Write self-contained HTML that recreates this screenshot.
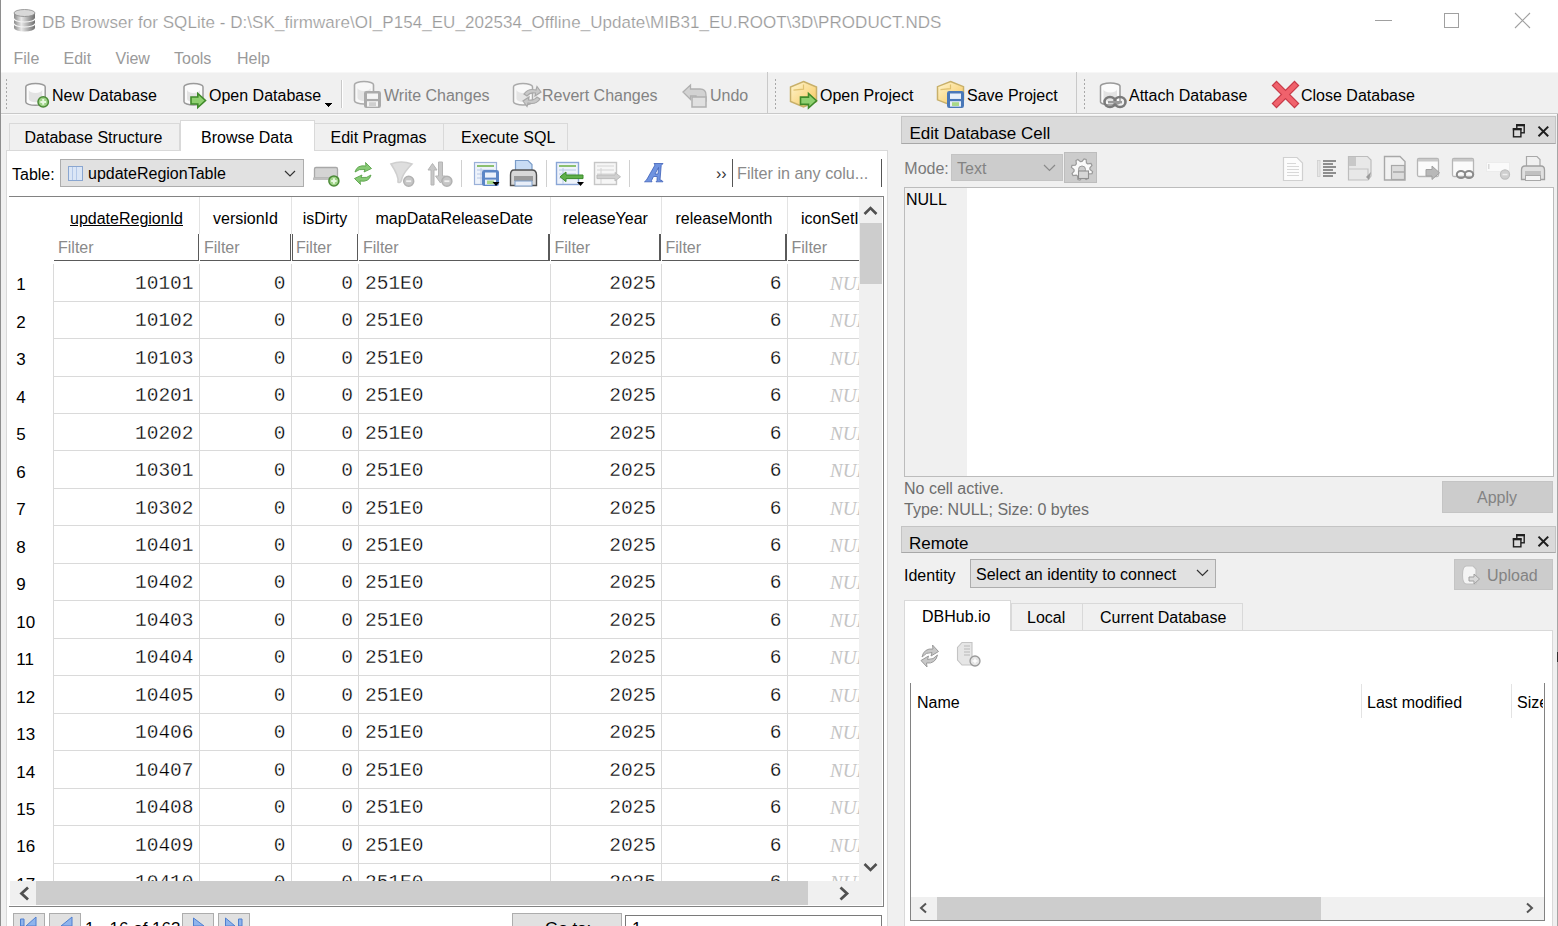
<!DOCTYPE html>
<html><head><meta charset="utf-8">
<style>
*{box-sizing:border-box;margin:0;padding:0}
html,body{width:1558px;height:926px;overflow:hidden;background:#f0f0f0}
body{position:relative;font-family:"Liberation Sans",sans-serif;font-size:16px;color:#000}
.a{position:absolute}
.t{position:absolute;white-space:nowrap;line-height:1}
svg{overflow:visible}
</style></head><body>
<div class="a" style="left:0px;top:0px;width:1px;height:926px;background:#8e8e8e"></div>
<div class="a" style="left:1557px;top:0px;width:1px;height:926px;background:#a6a6a6"></div>
<div class="a" style="left:1557px;top:652px;width:1px;height:10px;background:#333"></div>
<div class="a" style="left:1px;top:0px;width:1557px;height:73px;background:#fff"></div>
<svg class="a" style="left:13px;top:9px" width="23" height="23" viewBox="0 0 23 23"><defs><linearGradient id="dbg" x1="0" x2="1"><stop offset="0" stop-color="#8a8a8a"/><stop offset=".35" stop-color="#e8e8e8"/><stop offset="1" stop-color="#6e6e6e"/></linearGradient></defs>
<path d="M1 4 v15 a10.5 3.5 0 0 0 21 0 v-15z" fill="url(#dbg)"/>
<ellipse cx="11.5" cy="4" rx="10.5" ry="3.5" fill="#d8d8d8" stroke="#8a8a8a" stroke-width=".8"/>
<path d="M1 9.5 a10.5 3.5 0 0 0 21 0 M1 14.5 a10.5 3.5 0 0 0 21 0" fill="none" stroke="#f4f4f4" stroke-width="1.2"/></svg>
<div class="t" style="left:42px;top:13.71px;font-size:17px;color:#9b9b9b;letter-spacing:0.05px;-webkit-text-stroke:0.2px #fff;">DB Browser for SQLite - D:\SK_firmware\OI_P154_EU_202534_Offline_Update\MIB31_EU.ROOT\3D\PRODUCT.NDS</div>
<div class="a" style="left:1375px;top:20px;width:17px;height:1px;background:#a0a0a0"></div>
<div class="a" style="left:1444px;top:13px;width:15px;height:15px;border:1px solid #a0a0a0"></div>
<svg class="a" style="left:1514px;top:12px" width="17" height="17" viewBox="0 0 17 17"><path d="M1 1 L16 16 M16 1 L1 16" stroke="#a0a0a0" stroke-width="1.1"/></svg>
<div class="t" style="left:13.5px;top:51.36px;font-size:16px;color:#9a9a9a;">File</div>
<div class="t" style="left:63.5px;top:51.36px;font-size:16px;color:#9a9a9a;">Edit</div>
<div class="t" style="left:115.5px;top:51.36px;font-size:16px;color:#9a9a9a;">View</div>
<div class="t" style="left:174px;top:51.36px;font-size:16px;color:#9a9a9a;">Tools</div>
<div class="t" style="left:237px;top:51.36px;font-size:16px;color:#9a9a9a;">Help</div>
<div class="a" style="left:1px;top:72px;width:1557px;height:1px;background:#f7f7f7"></div>
<div class="a" style="left:1px;top:73px;width:1557px;height:40px;background:#f0f0f0"></div>
<div class="a" style="left:1px;top:113px;width:1557px;height:1px;background:#c9c9c9"></div>
<div class="a" style="left:1px;top:114px;width:1556px;height:1px;background:#fafafa"></div>
<div class="a" style="left:6px;top:79px;width:1px;height:2px;background:#a8a8a8"></div>
<div class="a" style="left:6px;top:83px;width:1px;height:2px;background:#a8a8a8"></div>
<div class="a" style="left:6px;top:87px;width:1px;height:2px;background:#a8a8a8"></div>
<div class="a" style="left:6px;top:91px;width:1px;height:2px;background:#a8a8a8"></div>
<div class="a" style="left:6px;top:95px;width:1px;height:2px;background:#a8a8a8"></div>
<div class="a" style="left:6px;top:99px;width:1px;height:2px;background:#a8a8a8"></div>
<div class="a" style="left:6px;top:103px;width:1px;height:2px;background:#a8a8a8"></div>
<div class="a" style="left:6px;top:107px;width:1px;height:2px;background:#a8a8a8"></div>
<div class="a" style="left:775px;top:79px;width:1px;height:2px;background:#a8a8a8"></div>
<div class="a" style="left:775px;top:83px;width:1px;height:2px;background:#a8a8a8"></div>
<div class="a" style="left:775px;top:87px;width:1px;height:2px;background:#a8a8a8"></div>
<div class="a" style="left:775px;top:91px;width:1px;height:2px;background:#a8a8a8"></div>
<div class="a" style="left:775px;top:95px;width:1px;height:2px;background:#a8a8a8"></div>
<div class="a" style="left:775px;top:99px;width:1px;height:2px;background:#a8a8a8"></div>
<div class="a" style="left:775px;top:103px;width:1px;height:2px;background:#a8a8a8"></div>
<div class="a" style="left:775px;top:107px;width:1px;height:2px;background:#a8a8a8"></div>
<div class="a" style="left:1084px;top:79px;width:1px;height:2px;background:#a8a8a8"></div>
<div class="a" style="left:1084px;top:83px;width:1px;height:2px;background:#a8a8a8"></div>
<div class="a" style="left:1084px;top:87px;width:1px;height:2px;background:#a8a8a8"></div>
<div class="a" style="left:1084px;top:91px;width:1px;height:2px;background:#a8a8a8"></div>
<div class="a" style="left:1084px;top:95px;width:1px;height:2px;background:#a8a8a8"></div>
<div class="a" style="left:1084px;top:99px;width:1px;height:2px;background:#a8a8a8"></div>
<div class="a" style="left:1084px;top:103px;width:1px;height:2px;background:#a8a8a8"></div>
<div class="a" style="left:1084px;top:107px;width:1px;height:2px;background:#a8a8a8"></div>
<div class="a" style="left:767px;top:72px;width:1px;height:41px;background:#c9c9c9"></div>
<div class="a" style="left:1076px;top:72px;width:1px;height:41px;background:#c9c9c9"></div>
<div class="t" style="left:52px;top:88.36px;font-size:16px;color:#000;">New Database</div>
<div class="t" style="left:209px;top:88.36px;font-size:16px;color:#000;">Open Database</div>
<div class="t" style="left:384px;top:88.36px;font-size:16px;color:#838383;">Write Changes</div>
<div class="t" style="left:542px;top:88.36px;font-size:16px;color:#838383;">Revert Changes</div>
<div class="t" style="left:710px;top:88.36px;font-size:16px;color:#838383;">Undo</div>
<div class="t" style="left:820px;top:88.36px;font-size:16px;color:#000;">Open Project</div>
<div class="t" style="left:967px;top:88.36px;font-size:16px;color:#000;">Save Project</div>
<div class="t" style="left:1129px;top:88.36px;font-size:16px;color:#000;">Attach Database</div>
<div class="t" style="left:1301px;top:88.36px;font-size:16px;color:#000;">Close Database</div>
<svg class="a" style="left:22px;top:80px" width="28" height="30" viewBox="22 80 28 30"><path d="M25.8 86.7 A9.700000000000001 3.2 0 0 1 45.2 86.7 V102.1 A9.700000000000001 3.2 0 0 1 25.8 102.1 Z" fill="#fbfbfb" stroke="#9a9a9a" stroke-width="1.5"/><path d="M28.8 89.7 A6.700000000000001 3.2 0 0 0 42.2 89.7 V99.1 A6.700000000000001 3.2 0 0 1 28.8 99.1 Z" fill="#d8d8d8" opacity=".7"/><circle cx="43.2" cy="101.9" r="5.2" fill="#9fd387" stroke="#4b8a37" stroke-width="1.5"/><path d="M40.34 101.9 H46.06 M43.2 99.04 V104.76" stroke="#e8f8e0" stroke-width="2"/></svg>
<svg class="a" style="left:180px;top:80px" width="30" height="30" viewBox="180 80 30 30"><path d="M184 86.7 A9.5 3.2 0 0 1 203 86.7 V101.8 A9.5 3.2 0 0 1 184 101.8 Z" fill="#fbfbfb" stroke="#9a9a9a" stroke-width="1.5"/><path d="M187 89.7 A6.5 3.2 0 0 0 200 89.7 V98.8 A6.5 3.2 0 0 1 187 98.8 Z" fill="#d8d8d8" opacity=".7"/><path d="M191 97.0 H197.8 V93.5 L205.5 100.5 L197.8 107.5 V104.0 H191 Z" fill="#8fd070" stroke="#3f8a2a" stroke-width="1.6" stroke-linejoin="miter"/></svg>
<div class="a" style="left:325px;top:103px;width:7px;height:1px;background:#000"></div>
<div class="a" style="left:326px;top:104px;width:5px;height:1px;background:#000"></div>
<div class="a" style="left:327px;top:105px;width:3px;height:1px;background:#000"></div>
<div class="a" style="left:328px;top:106px;width:1px;height:1px;background:#000"></div>
<svg class="a" style="left:350px;top:78px" width="35" height="32" viewBox="350 78 35 32"><path d="M354.5 84.7 A9.5 3.2 0 0 1 373.5 84.7 V100.8 A9.5 3.2 0 0 1 354.5 100.8 Z" fill="#f8f8f8" stroke="#aaaaaa" stroke-width="1.6"/><path d="M357.5 87.7 A6.5 3.2 0 0 0 370.5 87.7 V97.8 A6.5 3.2 0 0 1 357.5 97.8 Z" fill="#dcdcdc" opacity=".7"/><rect x="364.8" y="91.8" width="15.4" height="15.4" rx="1.5" fill="#aaaaaa" stroke="#aaaaaa" stroke-width="1.6"/><rect x="367" y="93.5" width="11" height="5.44" fill="#f4f4f4"/><rect x="367" y="101.2" width="11" height="5.44" fill="#f4f4f4"/><rect x="369" y="102.22" width="7" height="3.74" fill="#cfcfcf"/></svg>
<svg class="a" style="left:510px;top:78px" width="35" height="32" viewBox="510 78 35 32"><path d="M513.5 86.7 A9.5 3.2 0 0 1 532.5 86.7 V101.8 A9.5 3.2 0 0 1 513.5 101.8 Z" fill="#f8f8f8" stroke="#aaaaaa" stroke-width="1.5"/><path d="M516.5 89.7 A6.5 3.2 0 0 0 529.5 89.7 V98.8 A6.5 3.2 0 0 1 516.5 98.8 Z" fill="#dcdcdc" opacity=".7"/><path d="M524 94 Q528 88 536 90 L537 86.5 L541 92 L535 96 L535.5 93 Q530 92 527 96 Z" fill="#c8c8c8" stroke="#a8a8a8" stroke-width="1.2"/><path d="M540 99 Q536 105 528 103 L527 106.5 L523 101 L529 97 L528.5 100 Q534 101 537 97 Z" fill="#c8c8c8" stroke="#a8a8a8" stroke-width="1.2"/></svg>
<svg class="a" style="left:678px;top:78px" width="34" height="32" viewBox="678 78 34 32"><path d="M683 92 L690.5 85 V89 H700 Q706 89 706 95 V101 H696 V96 H690.5 V99.5 Z" fill="#d2d2d2" stroke="#b0b0b0" stroke-width="1.3"/><rect x="692" y="97" width="14" height="10" fill="#e0e0e0" stroke="#b0b0b0" stroke-width="1.5"/></svg>
<svg class="a" style="left:786px;top:78px" width="34" height="32" viewBox="786 78 34 32"><defs><linearGradient id="hx790" x1="0" y1="0" x2="1" y2="1"><stop offset="0" stop-color="#fff6d0"/><stop offset="1" stop-color="#f6c65a"/></linearGradient></defs><path d="M803.5 81.5 L816.5 87.11 V101.39 L803.5 107 L790.5 101.39 V87.11 Z" fill="url(#hx790)" stroke="#c8b06a" stroke-width="1.5"/><path d="M793.5 90.11 L803.5 89.11 L803.5 84.5" fill="none" stroke="#d8b860" stroke-width="1.2" opacity=".8"/><path d="M800.5 97.125 H808.525 V93.5 L816.5 100.75 L808.525 108 V104.375 H800.5 Z" fill="#8fd070" stroke="#3f8a2a" stroke-width="1.6" stroke-linejoin="miter"/></svg>
<svg class="a" style="left:934px;top:78px" width="34" height="32" viewBox="934 78 34 32"><defs><linearGradient id="hx937" x1="0" y1="0" x2="1" y2="1"><stop offset="0" stop-color="#fff6d0"/><stop offset="1" stop-color="#f6c65a"/></linearGradient></defs><path d="M950.5 81.5 L963.5 86.67 V99.83 L950.5 105 L937.5 99.83 V86.67 Z" fill="url(#hx937)" stroke="#c8b06a" stroke-width="1.5"/><path d="M940.5 89.67 L950.5 88.67 L950.5 84.5" fill="none" stroke="#d8b860" stroke-width="1.2" opacity=".8"/><rect x="947.8" y="91.8" width="15.4" height="15.4" rx="1.5" fill="#4a78b8" stroke="#4a78b8" stroke-width="1.6"/><rect x="950" y="93.5" width="11" height="5.44" fill="#e8f0fa"/><rect x="950" y="101.2" width="11" height="5.44" fill="#e8f0fa"/><rect x="952" y="102.22" width="7" height="3.74" fill="#a8d888"/></svg>
<svg class="a" style="left:1096px;top:78px" width="34" height="32" viewBox="1096 78 34 32"><path d="M1100.5 86.2 A9.75 3.2 0 0 1 1120 86.2 V101.8 A9.75 3.2 0 0 1 1100.5 101.8 Z" fill="#fbfbfb" stroke="#999999" stroke-width="1.5"/><path d="M1103.5 89.2 A6.75 3.2 0 0 0 1117 89.2 V98.8 A6.75 3.2 0 0 1 1103.5 98.8 Z" fill="#d8d8d8" opacity=".7"/><ellipse cx="1110" cy="102" rx="5.5" ry="5" fill="none" stroke="#7a7a7a" stroke-width="2.6"/><ellipse cx="1120" cy="102" rx="5.5" ry="5" fill="none" stroke="#7a7a7a" stroke-width="2.6"/><rect x="1108" y="101" width="14" height="2.4" fill="#9a9a9a"/></svg>
<svg class="a" style="left:1270px;top:78px" width="32" height="32" viewBox="1270 78 32 32"><path d="M1276.5 85.5 L1294.5 103.5 M1294.5 85.5 L1276.5 103.5" stroke="#c83a48" stroke-width="7" stroke-linecap="square"/><path d="M1276.5 85.5 L1294.5 103.5 M1294.5 85.5 L1276.5 103.5" stroke="#f0626c" stroke-width="4.6" stroke-linecap="square"/></svg>
<div class="a" style="left:341px;top:80px;width:1px;height:28px;background:#c9c9c9"></div>
<div class="a" style="left:342px;top:80px;width:1px;height:28px;background:#fff"></div>
<div class="a" style="left:9px;top:123px;width:171px;height:28px;background:#f0f0f0;border:1px solid #d9d9d9;border-bottom:none"></div>
<div class="t" style="left:24.5px;top:129.86px;font-size:16px;color:#000;">Database Structure</div>
<div class="a" style="left:314px;top:123px;width:130px;height:28px;background:#f0f0f0;border:1px solid #d9d9d9;border-bottom:none"></div>
<div class="t" style="left:330.5px;top:129.86px;font-size:16px;color:#000;">Edit Pragmas</div>
<div class="a" style="left:443px;top:123px;width:125px;height:28px;background:#f0f0f0;border:1px solid #d9d9d9;border-bottom:none"></div>
<div class="t" style="left:461px;top:129.86px;font-size:16px;color:#000;">Execute SQL</div>
<div class="a" style="left:6px;top:150px;width:882px;height:790px;background:#fff;border:1px solid #d9d9d9"></div>
<div class="a" style="left:180px;top:120px;width:135px;height:31px;background:#fff;border:1px solid #d9d9d9;border-bottom:none"></div>
<div class="t" style="left:201px;top:129.86px;font-size:16px;color:#000;">Browse Data</div>
<div class="t" style="left:12px;top:167.36px;font-size:16px;color:#000;">Table:</div>
<div class="a" style="left:60px;top:159px;width:244px;height:28px;background:#e1e1e1;border:1px solid #adadad"></div>
<div class="t" style="left:88px;top:166.26px;font-size:16px;color:#000;">updateRegionTable</div>
<svg class="a" style="left:66px;top:164px" width="20" height="20" viewBox="66 164 20 20"><rect x="68.5" y="166.5" width="14" height="14" fill="#dbe6f6" stroke="#8aa6d0" stroke-width="1"/><path d="M72.5 167 V180 M76.5 167 V180" stroke="#b4c8e8" stroke-width="1"/></svg>
<svg class="a" style="left:282px;top:168px" width="16" height="12" viewBox="282 168 16 12"><path d="M285 171 L290 176 L295 171" fill="none" stroke="#333" stroke-width="1.2"/></svg>
<svg class="a" style="left:310px;top:160px" width="32" height="30" viewBox="310 160 32 30"><path d="M316 167.5 H336 Q337.5 167.5 337.5 169 V178 H314.5 V169 Q314.5 167.5 316 167.5 Z" fill="#d4d4d4" stroke="#a8a8a8" stroke-width="1.3"/><rect x="313" y="177.5" width="22" height="2.5" fill="#c0c0c0"/><circle cx="333.9" cy="180.9" r="5" fill="#9fd387" stroke="#4b8a37" stroke-width="1.5"/><path d="M331.15 180.9 H336.65 M333.9 178.15 V183.65" stroke="#e8f8e0" stroke-width="2"/></svg>
<svg class="a" style="left:350px;top:158px" width="26" height="32" viewBox="350 158 26 32"><path d="M355 172 Q357 164.5 366 166 L365.5 162.5 L371.5 168.5 L364 172 L365 169.5 Q359 168.5 355 172 Z" fill="#86c974" stroke="#5aa24a" stroke-width=".9"/><path d="M371 175 Q369 182.5 360 181 L360.5 184.5 L354.5 178.5 L362 175 L361 177.5 Q367 178.5 371 175 Z" fill="#86c974" stroke="#5aa24a" stroke-width=".9"/></svg>
<svg class="a" style="left:386px;top:158px" width="30" height="32" viewBox="386 158 30 32"><path d="M391 164 Q401 160 412 164 Q404 172 402 178 Q401 184 398 182 Q399 176 391 164 Z" fill="#dedede" stroke="#cfcfcf" stroke-width="1.6"/><circle cx="408.7" cy="181.2" r="5" fill="#c6c6c6" stroke="#b2b2b2" stroke-width="1.5"/><rect x="406.2" y="180.29999999999998" width="5" height="1.8" fill="#f0f0f0"/></svg>
<svg class="a" style="left:424px;top:158px" width="32" height="32" viewBox="424 158 32 32"><path d="M431 185 V170 H428 L432.5 163.5 L437 170 H434 V185 Z" fill="#c8c8c8" stroke="#b5b5b5" stroke-width="1"/><path d="M438.5 162 H442.5 V176 H445.5 L440.5 183 L435.5 176 H438.5 Z" fill="#c8c8c8" stroke="#b5b5b5" stroke-width="1"/><circle cx="446.9" cy="181.2" r="5" fill="#c6c6c6" stroke="#b2b2b2" stroke-width="1.5"/><rect x="444.4" y="180.29999999999998" width="5" height="1.8" fill="#f0f0f0"/></svg>
<svg class="a" style="left:470px;top:158px" width="32" height="32" viewBox="470 158 32 32"><rect x="474.5" y="162.5" width="22" height="22" fill="#eef3fb" stroke="#9ab0d8" stroke-width="1.2"/><rect x="477" y="165" width="17" height="2" fill="#8cc070"/><path d="M477 170 H494 M477 174 H494 M477 178 H494 M481 168 V184" stroke="#b8c8e6" stroke-width="1"/><rect x="482.8" y="170.8" width="15.4" height="14.4" rx="1.5" fill="#5b86c6" stroke="#5b86c6" stroke-width="1.6"/><rect x="485" y="172.5" width="11" height="5.12" fill="#eaf1fb"/><rect x="485" y="179.6" width="11" height="5.12" fill="#eaf1fb"/><rect x="487" y="180.56" width="7" height="3.52" fill="#a8d888"/><path d="M492.5 182 H499.5 L496 186 Z" fill="#000"/></svg>
<svg class="a" style="left:506px;top:156px" width="34" height="34" viewBox="506 156 34 34"><path d="M515.5 160.5 H528 L532 164.5 V174 H515.5 Z" fill="#c8dcf4" stroke="#7a9cc8" stroke-width="1.2"/><path d="M510.5 185.5 V175 Q510.5 170 514 170 H532 Q536.5 170 536.5 175 V185.5 Z" fill="#d8d8d8" stroke="#505050" stroke-width="1.4"/><rect x="514" y="176" width="19" height="5" fill="#9a9a9a"/><rect x="515" y="181" width="17" height="5" fill="#e8eef8" stroke="#7a9cc8" stroke-width="1"/></svg>
<svg class="a" style="left:552px;top:158px" width="36" height="32" viewBox="552 158 36 32"><rect x="556.5" y="162.5" width="22" height="22" fill="#eef3fb" stroke="#8aa6d6" stroke-width="1.4"/><rect x="559" y="165" width="17" height="2" fill="#8cc070"/><path d="M559 170 H576 M559 174 H576 M559 178 H576 M563 168 V184" stroke="#b8c8e6" stroke-width="1"/><path d="M560 176.8 L566 172 V175 H583 V178.6 H566 V181.6 Z" fill="#5fb04a" stroke="#3a8a2a" stroke-width="1"/><path d="M577 182 H584 L580.5 186 Z" fill="#000"/></svg>
<svg class="a" style="left:590px;top:158px" width="34" height="32" viewBox="590 158 34 32"><rect x="594.5" y="162.5" width="22" height="22" fill="#f6f6f6" stroke="#c6c6c6" stroke-width="1.4"/><path d="M597 166 H614 M597 170 H614 M597 174 H614 M601 168 V184" stroke="#d4d4d4" stroke-width="1"/><path d="M597 175 H615 V172.5 L620.5 176.8 L615 181 V178.6 H597 Z" fill="#d0d0d0" stroke="#bcbcbc" stroke-width="1"/></svg>
<svg class="a" style="left:640px;top:160px" width="28" height="26" viewBox="640 160 28 26"><path d="M644.5 181.8 H652 L651.5 180.5 L653.5 176.5 H657.2 L657 180.5 L656 181.8 H663 L662 180.5 L660 180 L661.2 165.5 L663 163.5 H654 L655 165 L646.5 180 Z M655 174 L658.5 167.5 L658 174 Z" fill="#6f93e0" stroke="#3e5fb8" stroke-width=".8"/></svg>
<div class="a" style="left:461px;top:160px;width:1px;height:27px;background:#d0d0d0"></div>
<div class="a" style="left:546px;top:160px;width:1px;height:27px;background:#d0d0d0"></div>
<div class="a" style="left:629px;top:160px;width:1px;height:27px;background:#d0d0d0"></div>
<div class="t" style="left:716px;top:165.86px;font-size:16px;color:#333;">››</div>
<div class="a" style="left:732px;top:159px;width:1px;height:28px;background:#555"></div>
<div class="a" style="left:881px;top:159px;width:1px;height:28px;background:#555"></div>
<div class="t" style="left:737px;top:165.29px;font-size:16.2px;color:#8a8a8a;">Filter in any colu...</div>
<div class="a" style="left:9px;top:196px;width:875px;height:711px;background:#fff;border:1px solid #828282;border-left:none"></div>
<div class="t" style="left:53.5px;width:146.0px;text-align:center;top:211.16px;font-size:16px;color:#000;text-decoration:underline;">updateRegionId</div>
<div class="t" style="left:199.5px;width:92.0px;text-align:center;top:211.16px;font-size:16px;color:#000;">versionId</div>
<div class="t" style="left:291.5px;width:67.0px;text-align:center;top:211.16px;font-size:16px;color:#000;">isDirty</div>
<div class="t" style="left:358.5px;width:191.5px;text-align:center;top:211.16px;font-size:16px;color:#000;">mapDataReleaseDate</div>
<div class="t" style="left:550.0px;width:111px;text-align:center;top:211.16px;font-size:16px;color:#000;">releaseYear</div>
<div class="t" style="left:661.0px;width:126px;text-align:center;top:211.16px;font-size:16px;color:#000;">releaseMonth</div>
<div class="a" style="left:787px;top:197px;width:72px;height:700px;overflow:hidden">
<div class="t" style="left:14px;top:14.16px;font-size:16px;color:#000;">iconSetId</div>
<div class="t" style="left:4.5px;top:43.46px;font-size:16px;color:#8a8a8a;">Filter</div>
</div>
<div class="a" style="left:199.0px;top:197px;width:1px;height:37px;background:#e3e3e3"></div>
<div class="a" style="left:291.0px;top:197px;width:1px;height:37px;background:#e3e3e3"></div>
<div class="a" style="left:358.0px;top:197px;width:1px;height:37px;background:#e3e3e3"></div>
<div class="a" style="left:549.5px;top:197px;width:1px;height:37px;background:#e3e3e3"></div>
<div class="a" style="left:660.5px;top:197px;width:1px;height:37px;background:#e3e3e3"></div>
<div class="a" style="left:786.5px;top:197px;width:1px;height:37px;background:#e3e3e3"></div>
<div class="a" style="left:197.7px;top:234px;width:1.6px;height:27px;background:#5a5a5a"></div>
<div class="a" style="left:54.0px;top:259.8px;width:145.0px;height:1.2px;background:#5a5a5a"></div>
<div class="t" style="left:58.0px;top:240.46px;font-size:16px;color:#8a8a8a;">Filter</div>
<div class="a" style="left:289.7px;top:234px;width:1.6px;height:27px;background:#5a5a5a"></div>
<div class="a" style="left:200.0px;top:259.8px;width:91.0px;height:1.2px;background:#5a5a5a"></div>
<div class="t" style="left:204.0px;top:240.46px;font-size:16px;color:#8a8a8a;">Filter</div>
<div class="a" style="left:292.0px;top:234px;width:1px;height:27px;background:#5a5a5a"></div>
<div class="a" style="left:356.7px;top:234px;width:1.6px;height:27px;background:#5a5a5a"></div>
<div class="a" style="left:292.0px;top:259.8px;width:66.0px;height:1.2px;background:#5a5a5a"></div>
<div class="t" style="left:296.0px;top:240.46px;font-size:16px;color:#8a8a8a;">Filter</div>
<div class="a" style="left:548.2px;top:234px;width:1.6px;height:27px;background:#5a5a5a"></div>
<div class="a" style="left:359.0px;top:259.8px;width:190.5px;height:1.2px;background:#5a5a5a"></div>
<div class="t" style="left:363.0px;top:240.46px;font-size:16px;color:#8a8a8a;">Filter</div>
<div class="a" style="left:659.2px;top:234px;width:1.6px;height:27px;background:#5a5a5a"></div>
<div class="a" style="left:550.5px;top:259.8px;width:110px;height:1.2px;background:#5a5a5a"></div>
<div class="t" style="left:554.5px;top:240.46px;font-size:16px;color:#8a8a8a;">Filter</div>
<div class="a" style="left:785.2px;top:234px;width:1.6px;height:27px;background:#5a5a5a"></div>
<div class="a" style="left:661.5px;top:259.8px;width:125px;height:1.2px;background:#5a5a5a"></div>
<div class="t" style="left:665.5px;top:240.46px;font-size:16px;color:#8a8a8a;">Filter</div>
<div class="a" style="left:787.5px;top:259.8px;width:71.5px;height:1.2px;background:#5a5a5a"></div>
<div class="a" style="left:53px;top:300.57000000000005px;width:806px;height:1px;background:#dadada"></div>
<div class="t" style="left:16.3px;top:276.44px;font-size:17px;color:#000;">1</div>
<div class="t" style="right:1364.5px;top:274.69px;font-size:19.5px;color:#000;font-family:'Liberation Mono',monospace;-webkit-text-stroke:0.3px #fff;">10101</div>
<div class="t" style="right:1272.5px;top:274.69px;font-size:19.5px;color:#000;font-family:'Liberation Mono',monospace;-webkit-text-stroke:0.3px #fff;">0</div>
<div class="t" style="right:1205px;top:274.69px;font-size:19.5px;color:#000;font-family:'Liberation Mono',monospace;-webkit-text-stroke:0.3px #fff;">0</div>
<div class="t" style="left:365px;top:274.69px;font-size:19.5px;color:#000;font-family:'Liberation Mono',monospace;-webkit-text-stroke:0.3px #fff;">251E0</div>
<div class="t" style="right:902px;top:274.69px;font-size:19.5px;color:#000;font-family:'Liberation Mono',monospace;-webkit-text-stroke:0.3px #fff;">2025</div>
<div class="t" style="right:776.5px;top:274.69px;font-size:19.5px;color:#000;font-family:'Liberation Mono',monospace;-webkit-text-stroke:0.3px #fff;">6</div>
<div class="a" style="left:787px;top:263.60px;width:72px;height:37.47px;overflow:hidden">
<div class="t" style="left:43px;top:10.12px;font-size:19px;color:#c4c4c4;font-family:'Liberation Serif',serif;font-style:italic;">NULL</div>
</div>
<div class="a" style="left:53px;top:338.0400000000001px;width:806px;height:1px;background:#dadada"></div>
<div class="t" style="left:16.3px;top:313.91px;font-size:17px;color:#000;">2</div>
<div class="t" style="right:1364.5px;top:312.16px;font-size:19.5px;color:#000;font-family:'Liberation Mono',monospace;-webkit-text-stroke:0.3px #fff;">10102</div>
<div class="t" style="right:1272.5px;top:312.16px;font-size:19.5px;color:#000;font-family:'Liberation Mono',monospace;-webkit-text-stroke:0.3px #fff;">0</div>
<div class="t" style="right:1205px;top:312.16px;font-size:19.5px;color:#000;font-family:'Liberation Mono',monospace;-webkit-text-stroke:0.3px #fff;">0</div>
<div class="t" style="left:365px;top:312.16px;font-size:19.5px;color:#000;font-family:'Liberation Mono',monospace;-webkit-text-stroke:0.3px #fff;">251E0</div>
<div class="t" style="right:902px;top:312.16px;font-size:19.5px;color:#000;font-family:'Liberation Mono',monospace;-webkit-text-stroke:0.3px #fff;">2025</div>
<div class="t" style="right:776.5px;top:312.16px;font-size:19.5px;color:#000;font-family:'Liberation Mono',monospace;-webkit-text-stroke:0.3px #fff;">6</div>
<div class="a" style="left:787px;top:301.07px;width:72px;height:37.47px;overflow:hidden">
<div class="t" style="left:43px;top:10.12px;font-size:19px;color:#c4c4c4;font-family:'Liberation Serif',serif;font-style:italic;">NULL</div>
</div>
<div class="a" style="left:53px;top:375.51px;width:806px;height:1px;background:#dadada"></div>
<div class="t" style="left:16.3px;top:351.38px;font-size:17px;color:#000;">3</div>
<div class="t" style="right:1364.5px;top:349.63px;font-size:19.5px;color:#000;font-family:'Liberation Mono',monospace;-webkit-text-stroke:0.3px #fff;">10103</div>
<div class="t" style="right:1272.5px;top:349.63px;font-size:19.5px;color:#000;font-family:'Liberation Mono',monospace;-webkit-text-stroke:0.3px #fff;">0</div>
<div class="t" style="right:1205px;top:349.63px;font-size:19.5px;color:#000;font-family:'Liberation Mono',monospace;-webkit-text-stroke:0.3px #fff;">0</div>
<div class="t" style="left:365px;top:349.63px;font-size:19.5px;color:#000;font-family:'Liberation Mono',monospace;-webkit-text-stroke:0.3px #fff;">251E0</div>
<div class="t" style="right:902px;top:349.63px;font-size:19.5px;color:#000;font-family:'Liberation Mono',monospace;-webkit-text-stroke:0.3px #fff;">2025</div>
<div class="t" style="right:776.5px;top:349.63px;font-size:19.5px;color:#000;font-family:'Liberation Mono',monospace;-webkit-text-stroke:0.3px #fff;">6</div>
<div class="a" style="left:787px;top:338.54px;width:72px;height:37.47px;overflow:hidden">
<div class="t" style="left:43px;top:10.12px;font-size:19px;color:#c4c4c4;font-family:'Liberation Serif',serif;font-style:italic;">NULL</div>
</div>
<div class="a" style="left:53px;top:412.98px;width:806px;height:1px;background:#dadada"></div>
<div class="t" style="left:16.3px;top:388.85px;font-size:17px;color:#000;">4</div>
<div class="t" style="right:1364.5px;top:387.10px;font-size:19.5px;color:#000;font-family:'Liberation Mono',monospace;-webkit-text-stroke:0.3px #fff;">10201</div>
<div class="t" style="right:1272.5px;top:387.10px;font-size:19.5px;color:#000;font-family:'Liberation Mono',monospace;-webkit-text-stroke:0.3px #fff;">0</div>
<div class="t" style="right:1205px;top:387.10px;font-size:19.5px;color:#000;font-family:'Liberation Mono',monospace;-webkit-text-stroke:0.3px #fff;">0</div>
<div class="t" style="left:365px;top:387.10px;font-size:19.5px;color:#000;font-family:'Liberation Mono',monospace;-webkit-text-stroke:0.3px #fff;">251E0</div>
<div class="t" style="right:902px;top:387.10px;font-size:19.5px;color:#000;font-family:'Liberation Mono',monospace;-webkit-text-stroke:0.3px #fff;">2025</div>
<div class="t" style="right:776.5px;top:387.10px;font-size:19.5px;color:#000;font-family:'Liberation Mono',monospace;-webkit-text-stroke:0.3px #fff;">6</div>
<div class="a" style="left:787px;top:376.01px;width:72px;height:37.47px;overflow:hidden">
<div class="t" style="left:43px;top:10.12px;font-size:19px;color:#c4c4c4;font-family:'Liberation Serif',serif;font-style:italic;">NULL</div>
</div>
<div class="a" style="left:53px;top:450.45000000000005px;width:806px;height:1px;background:#dadada"></div>
<div class="t" style="left:16.3px;top:426.32px;font-size:17px;color:#000;">5</div>
<div class="t" style="right:1364.5px;top:424.57px;font-size:19.5px;color:#000;font-family:'Liberation Mono',monospace;-webkit-text-stroke:0.3px #fff;">10202</div>
<div class="t" style="right:1272.5px;top:424.57px;font-size:19.5px;color:#000;font-family:'Liberation Mono',monospace;-webkit-text-stroke:0.3px #fff;">0</div>
<div class="t" style="right:1205px;top:424.57px;font-size:19.5px;color:#000;font-family:'Liberation Mono',monospace;-webkit-text-stroke:0.3px #fff;">0</div>
<div class="t" style="left:365px;top:424.57px;font-size:19.5px;color:#000;font-family:'Liberation Mono',monospace;-webkit-text-stroke:0.3px #fff;">251E0</div>
<div class="t" style="right:902px;top:424.57px;font-size:19.5px;color:#000;font-family:'Liberation Mono',monospace;-webkit-text-stroke:0.3px #fff;">2025</div>
<div class="t" style="right:776.5px;top:424.57px;font-size:19.5px;color:#000;font-family:'Liberation Mono',monospace;-webkit-text-stroke:0.3px #fff;">6</div>
<div class="a" style="left:787px;top:413.48px;width:72px;height:37.47px;overflow:hidden">
<div class="t" style="left:43px;top:10.12px;font-size:19px;color:#c4c4c4;font-family:'Liberation Serif',serif;font-style:italic;">NULL</div>
</div>
<div class="a" style="left:53px;top:487.9200000000001px;width:806px;height:1px;background:#dadada"></div>
<div class="t" style="left:16.3px;top:463.79px;font-size:17px;color:#000;">6</div>
<div class="t" style="right:1364.5px;top:462.04px;font-size:19.5px;color:#000;font-family:'Liberation Mono',monospace;-webkit-text-stroke:0.3px #fff;">10301</div>
<div class="t" style="right:1272.5px;top:462.04px;font-size:19.5px;color:#000;font-family:'Liberation Mono',monospace;-webkit-text-stroke:0.3px #fff;">0</div>
<div class="t" style="right:1205px;top:462.04px;font-size:19.5px;color:#000;font-family:'Liberation Mono',monospace;-webkit-text-stroke:0.3px #fff;">0</div>
<div class="t" style="left:365px;top:462.04px;font-size:19.5px;color:#000;font-family:'Liberation Mono',monospace;-webkit-text-stroke:0.3px #fff;">251E0</div>
<div class="t" style="right:902px;top:462.04px;font-size:19.5px;color:#000;font-family:'Liberation Mono',monospace;-webkit-text-stroke:0.3px #fff;">2025</div>
<div class="t" style="right:776.5px;top:462.04px;font-size:19.5px;color:#000;font-family:'Liberation Mono',monospace;-webkit-text-stroke:0.3px #fff;">6</div>
<div class="a" style="left:787px;top:450.95px;width:72px;height:37.47px;overflow:hidden">
<div class="t" style="left:43px;top:10.12px;font-size:19px;color:#c4c4c4;font-family:'Liberation Serif',serif;font-style:italic;">NULL</div>
</div>
<div class="a" style="left:53px;top:525.39px;width:806px;height:1px;background:#dadada"></div>
<div class="t" style="left:16.3px;top:501.26px;font-size:17px;color:#000;">7</div>
<div class="t" style="right:1364.5px;top:499.51px;font-size:19.5px;color:#000;font-family:'Liberation Mono',monospace;-webkit-text-stroke:0.3px #fff;">10302</div>
<div class="t" style="right:1272.5px;top:499.51px;font-size:19.5px;color:#000;font-family:'Liberation Mono',monospace;-webkit-text-stroke:0.3px #fff;">0</div>
<div class="t" style="right:1205px;top:499.51px;font-size:19.5px;color:#000;font-family:'Liberation Mono',monospace;-webkit-text-stroke:0.3px #fff;">0</div>
<div class="t" style="left:365px;top:499.51px;font-size:19.5px;color:#000;font-family:'Liberation Mono',monospace;-webkit-text-stroke:0.3px #fff;">251E0</div>
<div class="t" style="right:902px;top:499.51px;font-size:19.5px;color:#000;font-family:'Liberation Mono',monospace;-webkit-text-stroke:0.3px #fff;">2025</div>
<div class="t" style="right:776.5px;top:499.51px;font-size:19.5px;color:#000;font-family:'Liberation Mono',monospace;-webkit-text-stroke:0.3px #fff;">6</div>
<div class="a" style="left:787px;top:488.42px;width:72px;height:37.47px;overflow:hidden">
<div class="t" style="left:43px;top:10.12px;font-size:19px;color:#c4c4c4;font-family:'Liberation Serif',serif;font-style:italic;">NULL</div>
</div>
<div class="a" style="left:53px;top:562.86px;width:806px;height:1px;background:#dadada"></div>
<div class="t" style="left:16.3px;top:538.73px;font-size:17px;color:#000;">8</div>
<div class="t" style="right:1364.5px;top:536.98px;font-size:19.5px;color:#000;font-family:'Liberation Mono',monospace;-webkit-text-stroke:0.3px #fff;">10401</div>
<div class="t" style="right:1272.5px;top:536.98px;font-size:19.5px;color:#000;font-family:'Liberation Mono',monospace;-webkit-text-stroke:0.3px #fff;">0</div>
<div class="t" style="right:1205px;top:536.98px;font-size:19.5px;color:#000;font-family:'Liberation Mono',monospace;-webkit-text-stroke:0.3px #fff;">0</div>
<div class="t" style="left:365px;top:536.98px;font-size:19.5px;color:#000;font-family:'Liberation Mono',monospace;-webkit-text-stroke:0.3px #fff;">251E0</div>
<div class="t" style="right:902px;top:536.98px;font-size:19.5px;color:#000;font-family:'Liberation Mono',monospace;-webkit-text-stroke:0.3px #fff;">2025</div>
<div class="t" style="right:776.5px;top:536.98px;font-size:19.5px;color:#000;font-family:'Liberation Mono',monospace;-webkit-text-stroke:0.3px #fff;">6</div>
<div class="a" style="left:787px;top:525.89px;width:72px;height:37.47px;overflow:hidden">
<div class="t" style="left:43px;top:10.12px;font-size:19px;color:#c4c4c4;font-family:'Liberation Serif',serif;font-style:italic;">NULL</div>
</div>
<div class="a" style="left:53px;top:600.33px;width:806px;height:1px;background:#dadada"></div>
<div class="t" style="left:16.3px;top:576.20px;font-size:17px;color:#000;">9</div>
<div class="t" style="right:1364.5px;top:574.45px;font-size:19.5px;color:#000;font-family:'Liberation Mono',monospace;-webkit-text-stroke:0.3px #fff;">10402</div>
<div class="t" style="right:1272.5px;top:574.45px;font-size:19.5px;color:#000;font-family:'Liberation Mono',monospace;-webkit-text-stroke:0.3px #fff;">0</div>
<div class="t" style="right:1205px;top:574.45px;font-size:19.5px;color:#000;font-family:'Liberation Mono',monospace;-webkit-text-stroke:0.3px #fff;">0</div>
<div class="t" style="left:365px;top:574.45px;font-size:19.5px;color:#000;font-family:'Liberation Mono',monospace;-webkit-text-stroke:0.3px #fff;">251E0</div>
<div class="t" style="right:902px;top:574.45px;font-size:19.5px;color:#000;font-family:'Liberation Mono',monospace;-webkit-text-stroke:0.3px #fff;">2025</div>
<div class="t" style="right:776.5px;top:574.45px;font-size:19.5px;color:#000;font-family:'Liberation Mono',monospace;-webkit-text-stroke:0.3px #fff;">6</div>
<div class="a" style="left:787px;top:563.36px;width:72px;height:37.47px;overflow:hidden">
<div class="t" style="left:43px;top:10.12px;font-size:19px;color:#c4c4c4;font-family:'Liberation Serif',serif;font-style:italic;">NULL</div>
</div>
<div class="a" style="left:53px;top:637.8000000000001px;width:806px;height:1px;background:#dadada"></div>
<div class="t" style="left:16.3px;top:613.67px;font-size:17px;color:#000;">10</div>
<div class="t" style="right:1364.5px;top:611.92px;font-size:19.5px;color:#000;font-family:'Liberation Mono',monospace;-webkit-text-stroke:0.3px #fff;">10403</div>
<div class="t" style="right:1272.5px;top:611.92px;font-size:19.5px;color:#000;font-family:'Liberation Mono',monospace;-webkit-text-stroke:0.3px #fff;">0</div>
<div class="t" style="right:1205px;top:611.92px;font-size:19.5px;color:#000;font-family:'Liberation Mono',monospace;-webkit-text-stroke:0.3px #fff;">0</div>
<div class="t" style="left:365px;top:611.92px;font-size:19.5px;color:#000;font-family:'Liberation Mono',monospace;-webkit-text-stroke:0.3px #fff;">251E0</div>
<div class="t" style="right:902px;top:611.92px;font-size:19.5px;color:#000;font-family:'Liberation Mono',monospace;-webkit-text-stroke:0.3px #fff;">2025</div>
<div class="t" style="right:776.5px;top:611.92px;font-size:19.5px;color:#000;font-family:'Liberation Mono',monospace;-webkit-text-stroke:0.3px #fff;">6</div>
<div class="a" style="left:787px;top:600.83px;width:72px;height:37.47px;overflow:hidden">
<div class="t" style="left:43px;top:10.12px;font-size:19px;color:#c4c4c4;font-family:'Liberation Serif',serif;font-style:italic;">NULL</div>
</div>
<div class="a" style="left:53px;top:675.27px;width:806px;height:1px;background:#dadada"></div>
<div class="t" style="left:16.3px;top:651.14px;font-size:17px;color:#000;">11</div>
<div class="t" style="right:1364.5px;top:649.39px;font-size:19.5px;color:#000;font-family:'Liberation Mono',monospace;-webkit-text-stroke:0.3px #fff;">10404</div>
<div class="t" style="right:1272.5px;top:649.39px;font-size:19.5px;color:#000;font-family:'Liberation Mono',monospace;-webkit-text-stroke:0.3px #fff;">0</div>
<div class="t" style="right:1205px;top:649.39px;font-size:19.5px;color:#000;font-family:'Liberation Mono',monospace;-webkit-text-stroke:0.3px #fff;">0</div>
<div class="t" style="left:365px;top:649.39px;font-size:19.5px;color:#000;font-family:'Liberation Mono',monospace;-webkit-text-stroke:0.3px #fff;">251E0</div>
<div class="t" style="right:902px;top:649.39px;font-size:19.5px;color:#000;font-family:'Liberation Mono',monospace;-webkit-text-stroke:0.3px #fff;">2025</div>
<div class="t" style="right:776.5px;top:649.39px;font-size:19.5px;color:#000;font-family:'Liberation Mono',monospace;-webkit-text-stroke:0.3px #fff;">6</div>
<div class="a" style="left:787px;top:638.30px;width:72px;height:37.47px;overflow:hidden">
<div class="t" style="left:43px;top:10.12px;font-size:19px;color:#c4c4c4;font-family:'Liberation Serif',serif;font-style:italic;">NULL</div>
</div>
<div class="a" style="left:53px;top:712.74px;width:806px;height:1px;background:#dadada"></div>
<div class="t" style="left:16.3px;top:688.61px;font-size:17px;color:#000;">12</div>
<div class="t" style="right:1364.5px;top:686.86px;font-size:19.5px;color:#000;font-family:'Liberation Mono',monospace;-webkit-text-stroke:0.3px #fff;">10405</div>
<div class="t" style="right:1272.5px;top:686.86px;font-size:19.5px;color:#000;font-family:'Liberation Mono',monospace;-webkit-text-stroke:0.3px #fff;">0</div>
<div class="t" style="right:1205px;top:686.86px;font-size:19.5px;color:#000;font-family:'Liberation Mono',monospace;-webkit-text-stroke:0.3px #fff;">0</div>
<div class="t" style="left:365px;top:686.86px;font-size:19.5px;color:#000;font-family:'Liberation Mono',monospace;-webkit-text-stroke:0.3px #fff;">251E0</div>
<div class="t" style="right:902px;top:686.86px;font-size:19.5px;color:#000;font-family:'Liberation Mono',monospace;-webkit-text-stroke:0.3px #fff;">2025</div>
<div class="t" style="right:776.5px;top:686.86px;font-size:19.5px;color:#000;font-family:'Liberation Mono',monospace;-webkit-text-stroke:0.3px #fff;">6</div>
<div class="a" style="left:787px;top:675.77px;width:72px;height:37.47px;overflow:hidden">
<div class="t" style="left:43px;top:10.12px;font-size:19px;color:#c4c4c4;font-family:'Liberation Serif',serif;font-style:italic;">NULL</div>
</div>
<div class="a" style="left:53px;top:750.21px;width:806px;height:1px;background:#dadada"></div>
<div class="t" style="left:16.3px;top:726.08px;font-size:17px;color:#000;">13</div>
<div class="t" style="right:1364.5px;top:724.33px;font-size:19.5px;color:#000;font-family:'Liberation Mono',monospace;-webkit-text-stroke:0.3px #fff;">10406</div>
<div class="t" style="right:1272.5px;top:724.33px;font-size:19.5px;color:#000;font-family:'Liberation Mono',monospace;-webkit-text-stroke:0.3px #fff;">0</div>
<div class="t" style="right:1205px;top:724.33px;font-size:19.5px;color:#000;font-family:'Liberation Mono',monospace;-webkit-text-stroke:0.3px #fff;">0</div>
<div class="t" style="left:365px;top:724.33px;font-size:19.5px;color:#000;font-family:'Liberation Mono',monospace;-webkit-text-stroke:0.3px #fff;">251E0</div>
<div class="t" style="right:902px;top:724.33px;font-size:19.5px;color:#000;font-family:'Liberation Mono',monospace;-webkit-text-stroke:0.3px #fff;">2025</div>
<div class="t" style="right:776.5px;top:724.33px;font-size:19.5px;color:#000;font-family:'Liberation Mono',monospace;-webkit-text-stroke:0.3px #fff;">6</div>
<div class="a" style="left:787px;top:713.24px;width:72px;height:37.47px;overflow:hidden">
<div class="t" style="left:43px;top:10.12px;font-size:19px;color:#c4c4c4;font-family:'Liberation Serif',serif;font-style:italic;">NULL</div>
</div>
<div class="a" style="left:53px;top:787.6800000000001px;width:806px;height:1px;background:#dadada"></div>
<div class="t" style="left:16.3px;top:763.55px;font-size:17px;color:#000;">14</div>
<div class="t" style="right:1364.5px;top:761.80px;font-size:19.5px;color:#000;font-family:'Liberation Mono',monospace;-webkit-text-stroke:0.3px #fff;">10407</div>
<div class="t" style="right:1272.5px;top:761.80px;font-size:19.5px;color:#000;font-family:'Liberation Mono',monospace;-webkit-text-stroke:0.3px #fff;">0</div>
<div class="t" style="right:1205px;top:761.80px;font-size:19.5px;color:#000;font-family:'Liberation Mono',monospace;-webkit-text-stroke:0.3px #fff;">0</div>
<div class="t" style="left:365px;top:761.80px;font-size:19.5px;color:#000;font-family:'Liberation Mono',monospace;-webkit-text-stroke:0.3px #fff;">251E0</div>
<div class="t" style="right:902px;top:761.80px;font-size:19.5px;color:#000;font-family:'Liberation Mono',monospace;-webkit-text-stroke:0.3px #fff;">2025</div>
<div class="t" style="right:776.5px;top:761.80px;font-size:19.5px;color:#000;font-family:'Liberation Mono',monospace;-webkit-text-stroke:0.3px #fff;">6</div>
<div class="a" style="left:787px;top:750.71px;width:72px;height:37.47px;overflow:hidden">
<div class="t" style="left:43px;top:10.12px;font-size:19px;color:#c4c4c4;font-family:'Liberation Serif',serif;font-style:italic;">NULL</div>
</div>
<div class="a" style="left:53px;top:825.15px;width:806px;height:1px;background:#dadada"></div>
<div class="t" style="left:16.3px;top:801.02px;font-size:17px;color:#000;">15</div>
<div class="t" style="right:1364.5px;top:799.27px;font-size:19.5px;color:#000;font-family:'Liberation Mono',monospace;-webkit-text-stroke:0.3px #fff;">10408</div>
<div class="t" style="right:1272.5px;top:799.27px;font-size:19.5px;color:#000;font-family:'Liberation Mono',monospace;-webkit-text-stroke:0.3px #fff;">0</div>
<div class="t" style="right:1205px;top:799.27px;font-size:19.5px;color:#000;font-family:'Liberation Mono',monospace;-webkit-text-stroke:0.3px #fff;">0</div>
<div class="t" style="left:365px;top:799.27px;font-size:19.5px;color:#000;font-family:'Liberation Mono',monospace;-webkit-text-stroke:0.3px #fff;">251E0</div>
<div class="t" style="right:902px;top:799.27px;font-size:19.5px;color:#000;font-family:'Liberation Mono',monospace;-webkit-text-stroke:0.3px #fff;">2025</div>
<div class="t" style="right:776.5px;top:799.27px;font-size:19.5px;color:#000;font-family:'Liberation Mono',monospace;-webkit-text-stroke:0.3px #fff;">6</div>
<div class="a" style="left:787px;top:788.18px;width:72px;height:37.47px;overflow:hidden">
<div class="t" style="left:43px;top:10.12px;font-size:19px;color:#c4c4c4;font-family:'Liberation Serif',serif;font-style:italic;">NULL</div>
</div>
<div class="a" style="left:53px;top:862.62px;width:806px;height:1px;background:#dadada"></div>
<div class="t" style="left:16.3px;top:838.49px;font-size:17px;color:#000;">16</div>
<div class="t" style="right:1364.5px;top:836.74px;font-size:19.5px;color:#000;font-family:'Liberation Mono',monospace;-webkit-text-stroke:0.3px #fff;">10409</div>
<div class="t" style="right:1272.5px;top:836.74px;font-size:19.5px;color:#000;font-family:'Liberation Mono',monospace;-webkit-text-stroke:0.3px #fff;">0</div>
<div class="t" style="right:1205px;top:836.74px;font-size:19.5px;color:#000;font-family:'Liberation Mono',monospace;-webkit-text-stroke:0.3px #fff;">0</div>
<div class="t" style="left:365px;top:836.74px;font-size:19.5px;color:#000;font-family:'Liberation Mono',monospace;-webkit-text-stroke:0.3px #fff;">251E0</div>
<div class="t" style="right:902px;top:836.74px;font-size:19.5px;color:#000;font-family:'Liberation Mono',monospace;-webkit-text-stroke:0.3px #fff;">2025</div>
<div class="t" style="right:776.5px;top:836.74px;font-size:19.5px;color:#000;font-family:'Liberation Mono',monospace;-webkit-text-stroke:0.3px #fff;">6</div>
<div class="a" style="left:787px;top:825.65px;width:72px;height:37.47px;overflow:hidden">
<div class="t" style="left:43px;top:10.12px;font-size:19px;color:#c4c4c4;font-family:'Liberation Serif',serif;font-style:italic;">NULL</div>
</div>
<div class="a" style="left:53px;top:900.09px;width:806px;height:1px;background:#dadada"></div>
<div class="t" style="left:16.3px;top:875.96px;font-size:17px;color:#000;">17</div>
<div class="t" style="right:1364.5px;top:874.21px;font-size:19.5px;color:#000;font-family:'Liberation Mono',monospace;-webkit-text-stroke:0.3px #fff;">10410</div>
<div class="t" style="right:1272.5px;top:874.21px;font-size:19.5px;color:#000;font-family:'Liberation Mono',monospace;-webkit-text-stroke:0.3px #fff;">0</div>
<div class="t" style="right:1205px;top:874.21px;font-size:19.5px;color:#000;font-family:'Liberation Mono',monospace;-webkit-text-stroke:0.3px #fff;">0</div>
<div class="t" style="left:365px;top:874.21px;font-size:19.5px;color:#000;font-family:'Liberation Mono',monospace;-webkit-text-stroke:0.3px #fff;">251E0</div>
<div class="t" style="right:902px;top:874.21px;font-size:19.5px;color:#000;font-family:'Liberation Mono',monospace;-webkit-text-stroke:0.3px #fff;">2025</div>
<div class="t" style="right:776.5px;top:874.21px;font-size:19.5px;color:#000;font-family:'Liberation Mono',monospace;-webkit-text-stroke:0.3px #fff;">6</div>
<div class="a" style="left:787px;top:863.12px;width:72px;height:37.47px;overflow:hidden">
<div class="t" style="left:43px;top:10.12px;font-size:19px;color:#c4c4c4;font-family:'Liberation Serif',serif;font-style:italic;">NULL</div>
</div>
<div class="a" style="left:53.0px;top:263.6px;width:1px;height:617px;background:#dadada"></div>
<div class="a" style="left:199.0px;top:263.6px;width:1px;height:617px;background:#dadada"></div>
<div class="a" style="left:291.0px;top:263.6px;width:1px;height:617px;background:#dadada"></div>
<div class="a" style="left:358.0px;top:263.6px;width:1px;height:617px;background:#dadada"></div>
<div class="a" style="left:549.5px;top:263.6px;width:1px;height:617px;background:#dadada"></div>
<div class="a" style="left:660.5px;top:263.6px;width:1px;height:617px;background:#dadada"></div>
<div class="a" style="left:786.5px;top:263.6px;width:1px;height:617px;background:#dadada"></div>
<div class="a" style="left:859px;top:197px;width:23px;height:684px;background:#f0f0f0"></div>
<div class="a" style="left:859.5px;top:223px;width:22px;height:61px;background:#cdcdcd"></div>
<div class="a" style="left:10px;top:881px;width:849px;height:24px;background:#f0f0f0"></div>
<div class="a" style="left:36px;top:881px;width:772px;height:24px;background:#cdcdcd"></div>
<div class="a" style="left:859px;top:881px;width:23px;height:24px;background:#f0f0f0"></div>
<div class="a" style="left:13.4px;top:913px;width:31.5px;height:20px;background:#e1e1e1;border:1px solid #adadad"></div>
<div class="a" style="left:49.2px;top:913px;width:31.5px;height:20px;background:#e1e1e1;border:1px solid #adadad"></div>
<div class="a" style="left:182.3px;top:913px;width:31.5px;height:20px;background:#e1e1e1;border:1px solid #adadad"></div>
<div class="a" style="left:218.4px;top:913px;width:31.5px;height:20px;background:#e1e1e1;border:1px solid #adadad"></div>
<svg class="a" style="left:13px;top:913px" width="237" height="13" viewBox="13 913 237 13"><path d="M20.5 919 H24 V926 H20.5 Z" fill="#8fb4ec" stroke="#4f7fd0" stroke-width="1"/><path d="M36 917 L26 926 H36 Z" fill="#8fb4ec" stroke="#4f7fd0" stroke-width="1"/><path d="M72 917 L61 926 H72 Z" fill="#8fb4ec" stroke="#4f7fd0" stroke-width="1"/><path d="M193.5 918 L204 926 H193.5 Z" fill="#8fb4ec" stroke="#4f7fd0" stroke-width="1"/><path d="M225.5 918 L235 926 H225.5 Z" fill="#8fb4ec" stroke="#4f7fd0" stroke-width="1"/><path d="M238.5 919 H242 V926 H238.5 Z" fill="#8fb4ec" stroke="#4f7fd0" stroke-width="1"/></svg>
<div class="t" style="left:85px;top:920.11px;font-size:17px;color:#000;">1 - 16 of 163</div>
<div class="a" style="left:512.4px;top:913.4px;width:110px;height:20px;background:#e1e1e1;border:1px solid #adadad"></div>
<div class="t" style="left:545px;top:920.11px;font-size:17px;color:#000;">Go to:</div>
<div class="a" style="left:624.7px;top:914.7px;width:257px;height:20px;background:#fff;border:1px solid #7a7a7a"></div>
<div class="t" style="left:632px;top:920.11px;font-size:17px;color:#000;">1</div>
<svg class="a" style="left:860px;top:200px" width="22" height="22" viewBox="860 200 22 22"><path d="M864.5 214 L870.5 208 L876.5 214" fill="none" stroke="#505050" stroke-width="2.6"/></svg>
<svg class="a" style="left:860px;top:856px" width="22" height="22" viewBox="860 856 22 22"><path d="M864.5 864 L870.5 870 L876.5 864" fill="none" stroke="#505050" stroke-width="2.6"/></svg>
<svg class="a" style="left:14px;top:882px" width="26" height="22" viewBox="14 882 26 22"><path d="M28 887.5 L21.5 893.5 L28 899.5" fill="none" stroke="#505050" stroke-width="2.8"/></svg>
<svg class="a" style="left:834px;top:882px" width="26" height="22" viewBox="834 882 26 22"><path d="M840.5 887.5 L847 893.5 L840.5 899.5" fill="none" stroke="#505050" stroke-width="2.8"/></svg>
<div class="a" style="left:901px;top:116px;width:655px;height:28px;background:#dadada;border:1px solid #c4c4c4;border-bottom:1px solid #a8a8a8"></div>
<div class="t" style="left:909.5px;top:125.21px;font-size:17px;color:#000;">Edit Database Cell</div>
<svg class="a" style="left:1508px;top:118px" width="46" height="26" viewBox="1508 118 46 26"><rect x="1516.8" y="124.8" width="7.4" height="8" fill="none" stroke="#1e1e1e" stroke-width="1.4"/><rect x="1516.1" y="124.1" width="8.8" height="2.2" fill="#1e1e1e"/><rect x="1513.5" y="128.8" width="7.4" height="8" fill="#dadada" stroke="#1e1e1e" stroke-width="1.4"/><rect x="1512.8" y="128.1" width="8.8" height="2.2" fill="#1e1e1e"/><path d="M1538.5 126.6 L1548.2 136.3 M1548.2 126.6 L1538.5 136.3" stroke="#1e1e1e" stroke-width="2"/></svg>
<div class="t" style="left:904.3px;top:161.06px;font-size:16px;color:#7a7a7a;">Mode:</div>
<div class="a" style="left:951px;top:154px;width:112px;height:27px;background:#cccccc;border:1px solid #c4c4c4"></div>
<div class="t" style="left:957px;top:161.06px;font-size:16px;color:#838383;">Text</div>
<svg class="a" style="left:1040px;top:160px" width="20" height="16" viewBox="1040 160 20 16"><path d="M1044 165 L1049.5 170.5 L1055 165" fill="none" stroke="#8a8a8a" stroke-width="1.2"/></svg>
<div class="a" style="left:1064px;top:152px;width:33px;height:31px;background:#cccccc;border:1px solid #bdbdbd"></div>
<svg class="a" style="left:1066px;top:154px" width="30" height="28" viewBox="1066 154 30 28"><path d="M1090.00 169.50 L1092.59 171.61 L1091.98 173.63 L1088.65 173.94 L1087.66 175.16 L1088.00 178.48 L1086.13 179.48 L1083.56 177.35 L1082.00 177.50 L1079.89 180.09 L1077.87 179.48 L1077.56 176.15 L1076.34 175.16 L1073.02 175.50 L1072.02 173.63 L1074.15 171.06 L1074.00 169.50 L1071.41 167.39 L1072.02 165.37 L1075.35 165.06 L1076.34 163.84 L1076.00 160.52 L1077.87 159.52 L1080.44 161.65 L1082.00 161.50 L1084.11 158.91 L1086.13 159.52 L1086.44 162.85 L1087.66 163.84 L1090.98 163.50 L1091.98 165.37 L1089.85 167.94Z" fill="#fafafa" stroke="#9a9a9a" stroke-width="1.2"/><circle cx="1082" cy="169.5" r="3.5" fill="#cccccc" stroke="#9a9a9a" stroke-width="1"/><rect x="1078.5" y="171" width="10" height="7.5" fill="#d6d6d6" stroke="#909090" stroke-width="1.1"/></svg>
<svg class="a" style="left:1280px;top:154px" width="268" height="30" viewBox="1280 154 268 30"><path d="M1283.5 157.5 H1297 L1302.5 163 V180.5 H1283.5 Z" fill="#fcfcfc" stroke="#d0d0d0" stroke-width="1.2"/><path d="M1287 163.5 H1296 M1287 166.5 H1299 M1287 169.5 H1299 M1287 172.5 H1299 M1287 175.5 H1299" stroke="#d8d8d8" stroke-width="1"/><rect x="1317.5" y="160.5" width="2.5" height="16" fill="#e6e6e6" stroke="#cfcfcf" stroke-width=".8"/><path d="M1323 161 H1336 M1323 164 H1333 M1323 167 H1336 M1323 170 H1333 M1323 173 H1336 M1323 176 H1333" stroke="#6e6e6e" stroke-width="1.3"/><path d="M1348.5 156.5 H1367.5 L1371 160 V176 L1368 180 H1348.5 Z" fill="#e8e8e8" stroke="#bdbdbd" stroke-width="1.2"/><rect x="1349" y="157" width="7" height="9" fill="#c8c8c8"/><path d="M1349 169 H1368 V178" fill="none" stroke="#c4c4c4" stroke-width="1.2"/><path d="M1366 177 L1371 172 L1369 180 Z" fill="#9a9a9a"/><path d="M1384.5 156.5 H1400 L1405 161.5 V180 H1384.5 Z" fill="#f2f2f2" stroke="#a8a8a8" stroke-width="1.4"/><rect x="1391.5" y="165.5" width="13" height="14" fill="#dcdcdc" stroke="#a8a8a8" stroke-width="1.2"/><path d="M1393 172 H1404" stroke="#a8a8a8" stroke-width="1.5"/><rect x="1417.5" y="158.5" width="21" height="18" rx="1.5" fill="#fbfbfb" stroke="#b6b6b6" stroke-width="1.3"/><rect x="1418" y="159" width="20" height="2.5" fill="#c8c8c8"/><path d="M1426 169.5 H1432 V166 L1439.5 172.8 L1432 179.5 V176 H1426 Z" fill="#b8b8b8" stroke="#a0a0a0" stroke-width="1"/><rect x="1452.5" y="158.5" width="21" height="18" rx="1.5" fill="#fbfbfb" stroke="#b6b6b6" stroke-width="1.3"/><rect x="1453" y="159" width="20" height="2.5" fill="#c8c8c8"/><ellipse cx="1461" cy="174.5" rx="4.2" ry="3.6" fill="none" stroke="#8a8a8a" stroke-width="2"/><ellipse cx="1469" cy="174.5" rx="4.2" ry="3.6" fill="none" stroke="#8a8a8a" stroke-width="2"/><rect x="1486.5" y="162.5" width="23" height="9" fill="#fafafa" stroke="#ececec" stroke-width="1"/><rect x="1488" y="164" width="1.5" height="5" fill="#d8d8d8"/><circle cx="1505" cy="174.5" r="4.6" fill="#cfcfcf" stroke="#bdbdbd" stroke-width="1.1"/><rect x="1502.5" y="173.8" width="5" height="1.5" fill="#eeeeee"/><path d="M1526.5 156.5 H1537 L1540 159.5 V167 H1526.5 Z" fill="#f0f0f0" stroke="#a8a8a8" stroke-width="1.2"/><path d="M1521.5 179.5 V170 Q1521.5 166 1525 166 H1541 Q1544.5 166 1544.5 170 V179.5 Z" fill="#e0e0e0" stroke="#a0a0a0" stroke-width="1.3"/><rect x="1525" y="171" width="16" height="4" fill="#c0c0c0"/><rect x="1525.5" y="175.5" width="15" height="5" fill="#f4f4f4" stroke="#a8a8a8" stroke-width="1"/></svg>
<div class="a" style="left:904px;top:187px;width:650px;height:290px;background:#fff;border:1px solid #bcbcbc"></div>
<div class="a" style="left:905px;top:188px;width:62px;height:288px;background:#f0f0f0"></div>
<div class="t" style="left:906px;top:192.36px;font-size:16px;color:#000;">NULL</div>
<div class="t" style="left:904px;top:481.36px;font-size:16px;color:#6d6d6d;">No cell active.</div>
<div class="t" style="left:904px;top:502.36px;font-size:16px;color:#6d6d6d;">Type: NULL; Size: 0 bytes</div>
<div class="a" style="left:1442px;top:481px;width:111px;height:32px;background:#cccccc;border:1px solid #c4c4c4"></div>
<div class="t" style="left:1477px;top:490.36px;font-size:16px;color:#838383;">Apply</div>
<div class="a" style="left:901px;top:526px;width:655px;height:27px;background:#dadada;border:1px solid #c4c4c4;border-bottom:1px solid #a8a8a8"></div>
<div class="t" style="left:909px;top:534.51px;font-size:17px;color:#000;">Remote</div>
<svg class="a" style="left:1508px;top:528px" width="46" height="26" viewBox="1508 528 46 26"><rect x="1516.8" y="534.8" width="7.4" height="8" fill="none" stroke="#1e1e1e" stroke-width="1.4"/><rect x="1516.1" y="534.1" width="8.8" height="2.2" fill="#1e1e1e"/><rect x="1513.5" y="538.8" width="7.4" height="8" fill="#dadada" stroke="#1e1e1e" stroke-width="1.4"/><rect x="1512.8" y="538.1" width="8.8" height="2.2" fill="#1e1e1e"/><path d="M1538.5 536.6 L1548.2 546.3 M1548.2 536.6 L1538.5 546.3" stroke="#1e1e1e" stroke-width="2"/></svg>
<div class="t" style="left:904px;top:568.36px;font-size:16px;color:#000;">Identity</div>
<div class="a" style="left:970px;top:559px;width:246px;height:29px;background:#e1e1e1;border:1px solid #adadad"></div>
<div class="t" style="left:976px;top:567.36px;font-size:16px;color:#000;">Select an identity to connect</div>
<svg class="a" style="left:1192px;top:566px" width="20" height="14" viewBox="1192 566 20 14"><path d="M1197 570 L1202.5 575.5 L1208 570" fill="none" stroke="#333" stroke-width="1.2"/></svg>
<div class="a" style="left:1454px;top:559px;width:99px;height:31px;background:#cccccc;border:1px solid #c4c4c4"></div>
<svg class="a" style="left:1458px;top:562px" width="28" height="26" viewBox="1458 562 28 26"><path d="M1466.5 566 H1473 L1476 569 V584 H1466.5 Q1462.5 584 1462.5 575 Q1462.5 566 1466.5 566 Z" fill="#f4f4f4" stroke="#c0c0c0" stroke-width="1.1"/><path d="M1469 577 H1474 V574 L1479.5 579 L1474 584 V581 H1469 Z" fill="#d8d8d8" stroke="#a0a0a0" stroke-width="1"/></svg>
<div class="t" style="left:1487px;top:568.36px;font-size:16px;color:#838383;">Upload</div>
<div class="a" style="left:1011px;top:603px;width:72px;height:28px;background:#f0f0f0;border:1px solid #d9d9d9;border-bottom:none"></div>
<div class="t" style="left:1027px;top:610.36px;font-size:16px;color:#000;">Local</div>
<div class="a" style="left:1082px;top:603px;width:161px;height:28px;background:#f0f0f0;border:1px solid #d9d9d9;border-bottom:none"></div>
<div class="t" style="left:1100px;top:610.36px;font-size:16px;color:#000;">Current Database</div>
<div class="a" style="left:904px;top:630px;width:649px;height:300px;background:#fff;border:1px solid #d9d9d9"></div>
<div class="a" style="left:904px;top:600px;width:107px;height:31px;background:#fff;border:1px solid #d9d9d9;border-bottom:none"></div>
<div class="t" style="left:922px;top:609.36px;font-size:16px;color:#000;">DBHub.io</div>
<svg class="a" style="left:918px;top:640px" width="24" height="28" viewBox="918 640 24 28"><path d="M922 657 Q924 648 933 649 L932.5 645 L938.5 651.5 L931 656 L932 652.5 Q926 652 922 657 Z" fill="#c8c8c8" stroke="#9a9a9a" stroke-width="1"/><path d="M937.5 655 Q935.5 664 926.5 663 L927 667 L921 660.5 L928.5 656 L927.5 659.5 Q933.5 660 937.5 655 Z" fill="#c8c8c8" stroke="#9a9a9a" stroke-width="1"/></svg>
<svg class="a" style="left:954px;top:640px" width="30" height="28" viewBox="954 640 30 28"><path d="M962 642.5 H972 V665 H962 L957.5 660 V647.5 Z" fill="#e6e6e6" stroke="#c4c4c4" stroke-width="1.1"/><path d="M964 646 H970 M964 649 H970 M964 652 H970 M964 655 H970" stroke="#b8b8b8" stroke-width="1"/><circle cx="975" cy="661" r="5" fill="#e4e4e4" stroke="#9a9a9a" stroke-width="1.3"/><path d="M972.5 661 H977.5 M975 658.5 V663.5" stroke="#fff" stroke-width="1.4"/></svg>
<div class="a" style="left:910px;top:683px;width:635px;height:238px;background:#fff;border:1px solid #828282;border-top:none"></div>
<div class="t" style="left:917px;top:695.36px;font-size:16px;color:#000;">Name</div>
<div class="t" style="left:1367px;top:695.36px;font-size:16px;color:#000;">Last modified</div>
<div class="a" style="left:1511px;top:690px;width:32px;height:30px;overflow:hidden">
<div class="t" style="left:6px;top:5.36px;font-size:16px;color:#000;">Size</div>
</div>
<div class="a" style="left:1361px;top:684px;width:1px;height:34px;background:#e3e3e3"></div>
<div class="a" style="left:1511px;top:684px;width:1px;height:34px;background:#e3e3e3"></div>
<div class="a" style="left:911px;top:896.5px;width:633px;height:23px;background:#f0f0f0"></div>
<div class="a" style="left:937px;top:896.5px;width:384px;height:23px;background:#cdcdcd"></div>
<svg class="a" style="left:915px;top:900px" width="17" height="16" viewBox="915 900 17 16"><path d="M926 903.5 L921 908 L926 912.5" fill="none" stroke="#555" stroke-width="2"/></svg>
<svg class="a" style="left:1521px;top:900px" width="17" height="16" viewBox="1521 900 17 16"><path d="M1527 903.5 L1532 908 L1527 912.5" fill="none" stroke="#555" stroke-width="2"/></svg>
</body></html>
